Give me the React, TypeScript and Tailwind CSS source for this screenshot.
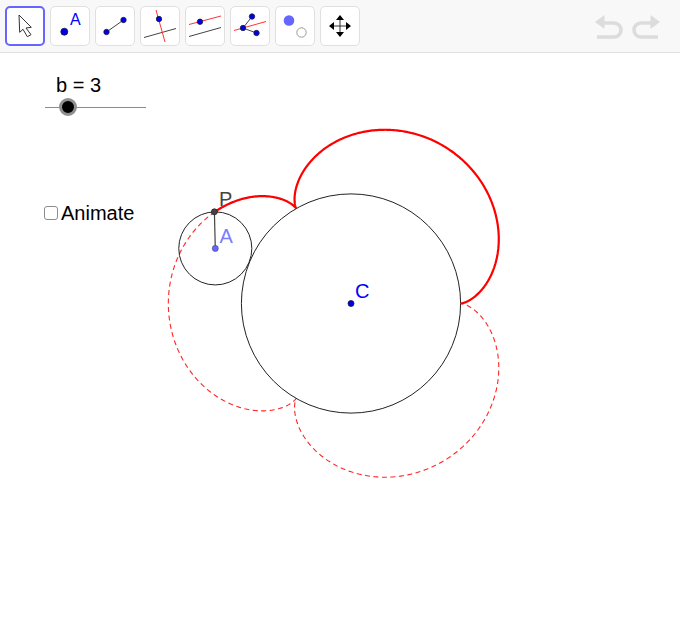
import React from 'react'

// epicycloid with 3 cusps around the big circle
const cx = 351
const cy = 303.5
const R = 109.6
const r = R / 3
const ax = 215.3
const ay = 248.4

const curve = (fromDeg: number, toDeg: number) => {
  const pts: string[] = []
  const steps = Math.ceil(Math.abs(toDeg - fromDeg)) * 3
  for (let i = 0; i <= steps; i++) {
    const t = ((fromDeg + ((toDeg - fromDeg) * i) / steps) * Math.PI) / 180
    const x = cx + 4 * r * Math.cos(t) - r * Math.cos(4 * t)
    const y = cy - 4 * r * Math.sin(t) + r * Math.sin(4 * t)
    pts.push(`${i === 0 ? 'M' : 'L'}${x.toFixed(2)} ${y.toFixed(2)}`)
  }
  return pts.join(' ')
}

const Dot = ({ x, y, r = 2.7 }: { x: number; y: number; r?: number }) => (
  <circle cx={x} cy={y} r={r} fill="#0000e6" stroke="#1a1a40" strokeWidth="0.8" />
)

const ToolButton = ({ active, children }: { active?: boolean; children: React.ReactNode }) => (
  <button
    className={
      active
        ? 'w-10 h-10 rounded-[5px] bg-white border-2 border-[#6666ff] box-border'
        : 'w-10 h-10 rounded-[5px] bg-white border border-[#e0e0e0] box-border'
    }
  >
    <svg viewBox={active ? '2 2 36 36' : '1 1 38 38'} className="block w-full h-full overflow-visible">
      {children}
    </svg>
  </button>
)

const Toolbar = () => (
  <div className="h-[53px] flex items-start justify-between bg-[#f8f8f8] border-b border-[#e0e0e0] pl-[5px] pt-[6px] box-border">
    <div className="flex gap-[5px]">
      <ToolButton active>
        <path d="M14 9 L26.3 21.3 L21 22 L26 28.7 L22.3 30.7 L18 23.3 L14.7 26.3 Z" fill="#fff" stroke="#333" strokeWidth="1" strokeLinejoin="round" />
      </ToolButton>
      <ToolButton>
        <circle cx="14.3" cy="25.7" r="3.5" fill="#0000e6" stroke="#1a1a40" strokeWidth="0.8" />
        <text x="20" y="19" fontSize="16" fill="#0000ff" fontFamily="'Liberation Sans', sans-serif">A</text>
      </ToolButton>
      <ToolButton>
        <line x1="11.5" y1="26" x2="28.5" y2="14" stroke="#444" strokeWidth="1" />
        <Dot x={11.5} y={26} />
        <Dot x={28.5} y={14} />
      </ToolButton>
      <ToolButton>
        <line x1="4" y1="31.5" x2="36" y2="22.5" stroke="#444" strokeWidth="1" />
        <line x1="16" y1="4" x2="25" y2="36" stroke="#ff3333" strokeWidth="1" />
        <Dot x={19} y={13} />
      </ToolButton>
      <ToolButton>
        <line x1="4" y1="18.5" x2="36" y2="10" stroke="#ff3333" strokeWidth="1" />
        <line x1="4" y1="30.5" x2="36" y2="21.5" stroke="#444" strokeWidth="1" />
        <Dot x={15} y={15.7} />
      </ToolButton>
      <ToolButton>
        <line x1="4" y1="24.5" x2="36" y2="15.5" stroke="#ff3333" strokeWidth="1" />
        <line x1="13" y1="22" x2="22" y2="10.5" stroke="#444" strokeWidth="1" />
        <line x1="13" y1="22" x2="26.5" y2="27" stroke="#444" strokeWidth="1" />
        <Dot x={22} y={10.5} />
        <Dot x={13} y={22} />
        <Dot x={26.5} y={27} />
      </ToolButton>
      <ToolButton>
        <circle cx="14" cy="14.5" r="5.3" fill="#6666ff" />
        <circle cx="26.5" cy="26.5" r="4.7" fill="#fff" stroke="#999" strokeWidth="1" />
      </ToolButton>
      <ToolButton>
        <path d="M20 12 V28 M12 20 H28" stroke="#333" strokeWidth="1" />
        <path d="M20 9 L24 14 H16 Z M20 31 L24 26 H16 Z M9 20 L14 16 V24 Z M31 20 L26 16 V24 Z" fill="#000" />
      </ToolButton>
    </div>
    <div className="flex gap-[9px] mr-5 mt-2">
      <svg viewBox="0 0 28 26" className="w-7 h-[26px]" fill="none">
        <path d="M2 23 H19 a7 7 0 0 0 0 -14 H8" stroke="#dcdcdc" strokeWidth="3.6" />
        <path d="M0 8 L9.5 1 V15 Z" fill="#dcdcdc" />
      </svg>
      <svg viewBox="0 0 28 26" className="w-7 h-[26px]" fill="none">
        <path d="M26 23 H9 a7 7 0 0 1 0 -14 H20" stroke="#dcdcdc" strokeWidth="3.6" />
        <path d="M28 8 L18.5 1 V15 Z" fill="#dcdcdc" />
      </svg>
    </div>
  </div>
)

const Graph = () => (
  <svg viewBox="0 53 680 591" className="absolute inset-0 w-full h-full">
    <path d={curve(157.8, 360)} fill="none" stroke="#ff0000" strokeOpacity="0.85" strokeWidth="1.1" strokeDasharray="5 3.5" />
    <circle cx={cx} cy={cy} r={R} fill="none" stroke="#222" strokeWidth="1" />
    <circle cx={ax} cy={ay} r={r} fill="none" stroke="#222" strokeWidth="1" />
    <path d={curve(0, 157.8)} fill="none" stroke="#ff0000" strokeWidth="2.2" />
    <line x1={ax} y1={ay} x2="214.4" y2="211.8" stroke="#444" strokeWidth="1.2" />
    <circle cx="214.4" cy="211.8" r="3" fill="#444" stroke="#222" strokeWidth="0.8" />
    <circle cx={ax} cy={ay} r="3.1" fill="#6666ff" stroke="#333" strokeWidth="0.4" />
    <circle cx={cx} cy={cy} r="3" fill="#0000e6" stroke="#1a1a40" strokeWidth="0.8" />
    <g fontFamily="'Liberation Sans', sans-serif" fontSize="20">
      <text x="219" y="206" fill="#444444">P</text>
      <text x="219.5" y="243" fill="#7d7dff">A</text>
      <text x="355" y="297.5" fill="#0000ff">C</text>
    </g>
  </svg>
)

export default function App() {
  return (
    <div className="w-[680px] h-[644px] flex flex-col bg-white overflow-hidden font-['Liberation_Sans',sans-serif] text-black">
      <Toolbar />
      <div className="relative flex-1">
        <Graph />
        {/* slider */}
        <div className="absolute left-[45px] top-[20px] w-[101px]">
          <div className="pl-[11px] text-[20px] leading-6">b = 3</div>
          <div className="relative h-5 flex items-center">
            <div className="w-full h-px bg-[#8c8c8c]" />
            <div className="absolute left-[14px] top-[1px] w-[18px] h-[18px] rounded-full bg-black border-[3px] border-[#8f8f8f] box-border" />
          </div>
        </div>
        {/* checkbox */}
        <label className="absolute left-[43.5px] top-[148px] flex items-center gap-[3.5px] text-[20px] leading-6">
          <span className="w-[14px] h-[14px] rounded-[3px] border-[1.5px] border-[#8c8c8c] bg-white box-border" />
          Animate
        </label>
      </div>
    </div>
  )
}
